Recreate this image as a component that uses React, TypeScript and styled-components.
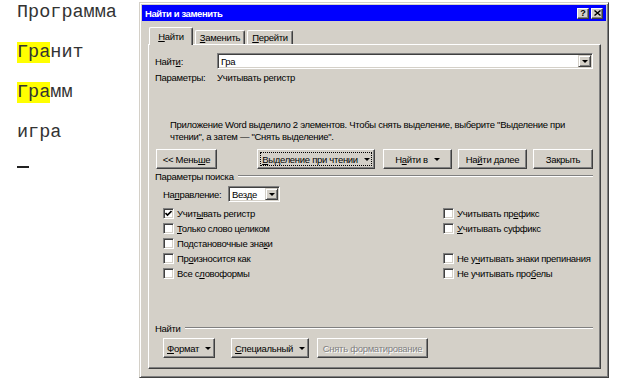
import React from "react";
import styled, { createGlobalStyle } from "styled-components";

const UI_FONT = `"Liberation Sans", Arial, sans-serif`;

const Global = createGlobalStyle`
  html, body { margin: 0; padding: 0; background: #fff; }
  body { font-family: "Liberation Sans", Arial, sans-serif; }
`;

const Page = styled.div`
  display: flex;
  align-items: flex-start;
  width: 620px;
  height: 384px;
  overflow: hidden;
`;

const Doc = styled.div`
  width: 139px;
  flex: 0 0 139px;
  box-sizing: border-box;
  padding: 2px 0 0 17px;
  display: flex;
  flex-direction: column;
  align-items: flex-start;
  font-family: "Liberation Mono", "Courier New", monospace;
  font-size: 18.5px;
  color: #333;
`;

const Para = styled.p`
  margin: 0 0 18px;
  line-height: 22px;
  white-space: nowrap;
`;

const Hl = styled.span`
  background: #ffff00;
`;

const EndMark = styled.div`
  width: 12px;
  height: 2px;
  background: #222;
  margin-top: 4px;
`;

const Dialog = styled.div`
  margin-top: 2px;
  width: 470px;
  height: 376px;
  flex: 0 0 470px;
  box-sizing: border-box;
  background: #d4d0c8;
  border: 1px solid;
  border-color: #d4d0c8 #404040 #404040 #d4d0c8;
  box-shadow: inset 1px 1px #fff, inset -1px -1px #808080;
  padding: 2px;
  display: flex;
  flex-direction: column;
  font-family: ${UI_FONT};
  font-size: 9.5px;
  letter-spacing: -0.3px;
  color: #000;
`;

const TitleBar = styled.div`
  height: 16px;
  flex: 0 0 16px;
  background: #0000ff;
  display: flex;
  align-items: center;
  padding: 0 3px 0 3px;
  gap: 2px;
`;

const TitleText = styled.div`
  flex: 1;
  color: #fff;
  font-weight: bold;
  font-size: 9.5px;
  letter-spacing: -0.4px;
  white-space: nowrap;
`;

const CaptionBtn = styled.div`
  width: 12px;
  height: 11px;
  box-sizing: border-box;
  background: #d4d0c8;
  border: 1px solid;
  border-color: #fff #404040 #404040 #fff;
  box-shadow: inset -1px -1px #808080;
  display: flex;
  align-items: center;
  justify-content: center;
  font-size: 9px;
  font-weight: bold;
  line-height: 9px;
  letter-spacing: 0;
  color: #000;
`;

const TabStrip = styled.div`
  display: flex;
  align-items: flex-end;
  height: 17px;
  margin: 6px 0 0 7px;
  gap: 2px;
  position: relative;
  z-index: 1;
`;

const Tab = styled.div<{ $w: number; $active?: boolean }>`
  width: ${(p) => p.$w}px;
  height: ${(p) => (p.$active ? 18 : 14)}px;
  margin-bottom: ${(p) => (p.$active ? -1 : 0)}px;
  box-sizing: border-box;
  background: #d4d0c8;
  border-top: 1px solid #fff;
  border-left: 1px solid #fff;
  border-right: 1px solid #404040;
  box-shadow: inset -1px 0 #808080;
  border-radius: 2px 2px 0 0;
  display: flex;
  align-items: ${(p) => (p.$active ? "flex-start" : "center")};
  padding-top: ${(p) => (p.$active ? 3 : 0)}px;
  justify-content: center;
  white-space: nowrap;
`;

const Panel = styled.div`
  height: 325px;
  flex: 0 0 325px;
  margin: 0 5px 0 6px;
  box-sizing: border-box;
  border: 1px solid;
  border-color: #fff #404040 #404040 #fff;
  box-shadow: inset -1px -1px #808080;
  padding: 8px 7px 10px 6px;
  display: flex;
  flex-direction: column;
`;

const Row = styled.div<{ $mt?: number; $ml?: number; $h?: number }>`
  display: flex;
  align-items: center;
  margin-top: ${(p) => p.$mt ?? 0}px;
  margin-left: ${(p) => p.$ml ?? 0}px;
  height: ${(p) => p.$h ?? 14}px;
  white-space: nowrap;
`;

const Label = styled.div<{ $w: number }>`
  width: ${(p) => p.$w}px;
  flex: 0 0 ${(p) => p.$w}px;
`;

const Field = styled.div<{ $w?: number }>`
  ${(p) => (p.$w ? `width: ${p.$w}px; flex: 0 0 ${p.$w}px;` : "flex: 1;")}
  height: 16px;
  box-sizing: border-box;
  background: #fff;
  border: 1px solid;
  border-color: #808080 #fff #fff #808080;
  box-shadow: inset 1px 1px #404040, inset -1px -1px #d4d0c8;
  padding: 1px;
  display: flex;
  align-items: center;
`;

const FieldText = styled.div`
  flex: 1;
  padding-left: 2px;
`;

const DropBtn = styled.div`
  width: 13px;
  height: 12px;
  box-sizing: border-box;
  background: #d4d0c8;
  border: 1px solid;
  border-color: #d4d0c8 #404040 #404040 #d4d0c8;
  box-shadow: inset 1px 1px #fff, inset -1px -1px #808080;
  display: flex;
  align-items: center;
  justify-content: center;
`;

const Caret = styled.span`
  width: 0;
  height: 0;
  border-left: 3px solid transparent;
  border-right: 3px solid transparent;
  border-top: 3px solid #000;
`;

const Message = styled.div`
  margin: 35px 0 0 15px;
  line-height: 12px;
  white-space: nowrap;
`;

const ButtonRow = styled.div<{ $mt: number }>`
  display: flex;
  align-items: center;
  margin-top: ${(p) => p.$mt}px;
`;

const Btn = styled.div<{ $w: number; $ml?: number; $focus?: boolean; $off?: boolean }>`
  width: ${(p) => p.$w}px;
  flex: 0 0 ${(p) => p.$w}px;
  height: 20px;
  margin-left: ${(p) => p.$ml ?? 0}px;
  box-sizing: border-box;
  background: #d4d0c8;
  border: 1px solid;
  border-color: #fff #404040 #404040 #fff;
  box-shadow: inset -1px -1px #808080;
  display: flex;
  align-items: center;
  justify-content: center;
  gap: 6px;
  white-space: nowrap;
  color: ${(p) => (p.$off ? "#808080" : "#000")};
  text-shadow: ${(p) => (p.$off ? "1px 1px #fff" : "none")};
  outline: ${(p) => (p.$focus ? "1px dotted #000" : "none")};
  outline-offset: -4px;
`;

const U = styled.span`
  text-decoration: underline;
`;

const Section = styled.div<{ $mt: number }>`
  display: flex;
  align-items: center;
  gap: 4px;
  height: 12px;
  margin-top: ${(p) => p.$mt}px;
  white-space: nowrap;
`;

const Rule = styled.div`
  flex: 1;
  height: 0;
  border-top: 1px solid #808080;
  border-bottom: 1px solid #fff;
`;

const Options = styled.div`
  display: grid;
  grid-template-columns: 280px 1fr;
  grid-template-rows: repeat(5, 15px);
  grid-auto-flow: column;
  margin: 4px 0 0 8px;
`;

const Check = styled.div`
  display: flex;
  align-items: center;
  gap: 3px;
  white-space: nowrap;
`;

const Box = styled.span`
  width: 11px;
  height: 11px;
  flex: 0 0 11px;
  box-sizing: border-box;
  background: #fff;
  border: 1px solid;
  border-color: #808080 #fff #fff #808080;
  box-shadow: inset 1px 1px #404040, inset -1px -1px #d4d0c8;
  display: flex;
  align-items: center;
  justify-content: center;
`;

const Bottom = styled.div`
  margin-top: auto;
  display: flex;
  flex-direction: column;
`;

const CheckMark = () => (
  <svg width="7" height="7" viewBox="0 0 7 7">
    <path d="M0.5 3 L2.5 5 L6.5 1" stroke="#000" strokeWidth="1.6" fill="none" />
  </svg>
);

const XGlyph = () => (
  <svg width="7" height="6" viewBox="0 0 7 6">
    <path d="M0.5 0.5 L6.5 5.5 M6.5 0.5 L0.5 5.5" stroke="#000" strokeWidth="1.4" fill="none" />
  </svg>
);

type Opt = { pre: string; u: string; post: string; checked?: boolean };

const leftOpts: Opt[] = [
  { pre: "Учит", u: "ы", post: "вать регистр", checked: true },
  { pre: "", u: "Т", post: "олько слово целиком" },
  { pre: "Подстановочные зна", u: "к", post: "и" },
  { pre: "Пр", u: "о", post: "износится как" },
  { pre: "Все с", u: "л", post: "овоформы" },
];

const rightOpts: (Opt | null)[] = [
  { pre: "Учитывать пр", u: "е", post: "фикс" },
  { pre: "", u: "У", post: "читывать суффикс" },
  null,
  { pre: "Не у", u: "ч", post: "итывать знаки препинания" },
  { pre: "Не учитывать про", u: "б", post: "елы" },
];

const Option = ({ o }: { o: Opt }) => (
  <Check>
    <Box>{o.checked && <CheckMark />}</Box>
    <span>
      {o.pre}
      <U>{o.u}</U>
      {o.post}
    </span>
  </Check>
);

export default function App() {
  return (
    <>
      <Global />
      <Page>
        <Doc>
          <Para>Программа</Para>
          <Para>
            <Hl>Гра</Hl>нит
          </Para>
          <Para>
            <Hl>Гра</Hl>мм
          </Para>
          <Para>игра</Para>
          <EndMark />
        </Doc>
        <Dialog>
          <TitleBar>
            <TitleText>Найти и заменить</TitleText>
            <CaptionBtn>?</CaptionBtn>
            <CaptionBtn>
              <XGlyph />
            </CaptionBtn>
          </TitleBar>
          <TabStrip>
            <Tab $w={44} $active>
              <span>
                <U>Н</U>айти
              </span>
            </Tab>
            <Tab $w={50}>
              <span>
                <U>З</U>аменить
              </span>
            </Tab>
            <Tab $w={46}>
              <span>
                <U>П</U>ерейти
              </span>
            </Tab>
          </TabStrip>
          <Panel>
            <Row $h={16}>
              <Label $w={62}>
                Найт<U>и</U>:
              </Label>
              <Field>
                <FieldText>Гра</FieldText>
                <DropBtn>
                  <Caret />
                </DropBtn>
              </Field>
            </Row>
            <Row $mt={1}>
              <Label $w={62}>Параметры:</Label>
              <span>Учитывать регистр</span>
            </Row>
            <Message>
              Приложение Word выделило 2 элементов. Чтобы снять выделение, выберите "Выделение при
              <br />
              чтении", а затем — "Снять выделение".
            </Message>
            <ButtonRow $mt={6}>
              <Btn $w={61} $ml={1}>
                <span>
                  &lt;&lt; Мень<U>ш</U>е
                </span>
              </Btn>
              <Btn $w={118} $ml={40} $focus>
                <span>
                  <U>В</U>ыделение при чтении
                </span>
                <Caret />
              </Btn>
              <Btn $w={69} $ml={8}>
                <span>
                  Н<U>а</U>йти в
                </span>
                <Caret />
              </Btn>
              <Btn $w={69} $ml={6}>
                <span>
                  На<U>й</U>ти далее
                </span>
              </Btn>
              <Btn $w={60} $ml={6}>
                <span>Закрыть</span>
              </Btn>
            </ButtonRow>
            <Section $mt={1}>
              <span>Параметры поиска</span>
              <Rule />
            </Section>
            <Row $mt={4} $ml={8} $h={16}>
              <Label $w={65}>
                На<U>п</U>равление:
              </Label>
              <Field $w={52}>
                <FieldText>Везде</FieldText>
                <DropBtn>
                  <Caret />
                </DropBtn>
              </Field>
            </Row>
            <Options>
              {leftOpts.map((o, i) => (
                <Option key={"l" + i} o={o} />
              ))}
              {rightOpts.map((o, i) => (o ? <Option key={"r" + i} o={o} /> : <div key={"r" + i} />))}
            </Options>
            <Bottom>
              <Section $mt={0}>
                <span>Найти</span>
                <Rule />
              </Section>
              <ButtonRow $mt={4}>
                <Btn $w={52} $ml={8}>
                  <span>
                    <U>Ф</U>ормат
                  </span>
                  <Caret />
                </Btn>
                <Btn $w={78} $ml={16}>
                  <span>
                    <U>С</U>пециальный
                  </span>
                  <Caret />
                </Btn>
                <Btn $w={111} $ml={8} $off>
                  <span>Снять форматирование</span>
                </Btn>
              </ButtonRow>
            </Bottom>
          </Panel>
        </Dialog>
      </Page>
    </>
  );
}
